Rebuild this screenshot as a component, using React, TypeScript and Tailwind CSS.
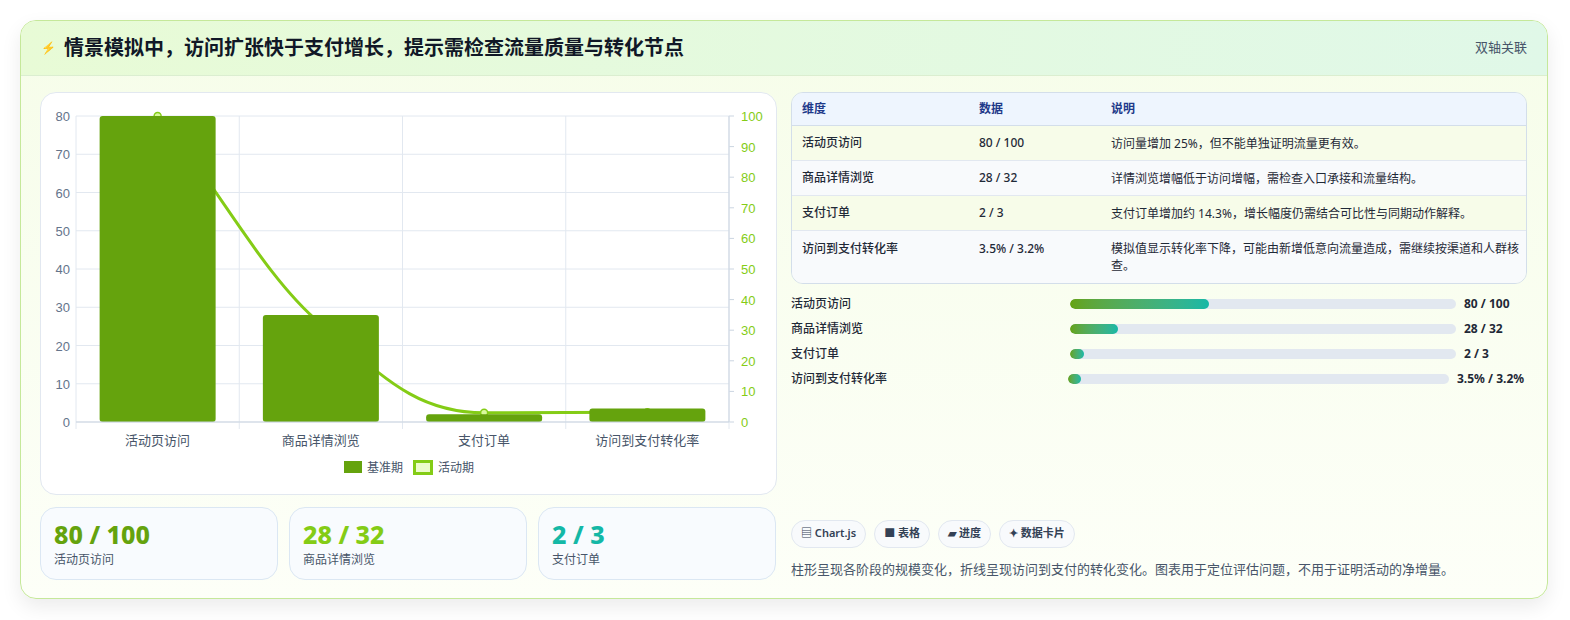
import React from "react";

const F = { fontFamily: '"Noto Sans", "Noto Sans CJK SC", sans-serif' };

function Chart() {
  const x0 = 35, x1 = 688, yTop = 23, yBot = 329;
  const cw = (x1 - x0) / 4;
  const cats = ["活动页访问", "商品详情浏览", "支付订单", "访问到支付转化率"];
  const bars = [80, 28, 2, 3.5];
  const line = [100, 32, 3, 3.2];
  const ly = (v: number) => yBot - (v / 80) * (yBot - yTop);
  const ry = (v: number) => yBot - (v / 100) * (yBot - yTop);
  const cx = (i: number) => x0 + cw * (i + 0.5);
  const pts = line.map((v, i) => [cx(i), ry(v)]);
  const d = `M${pts[0][0]},${pts[0][1]} C${pts[0][0] + 55},${pts[0][1] + 60} ${pts[1][0] - 60},${pts[1][1] - 50} ${pts[1][0]},${pts[1][1]} C${pts[1][0] + 60},${pts[1][1] + 50} ${pts[2][0] - 70},${pts[2][1]} ${pts[2][0]},${pts[2][1]} C${pts[2][0] + 60},${pts[2][1]} ${pts[3][0] - 60},${pts[3][1]} ${pts[3][0]},${pts[3][1]}`;
  return (
    <svg width="737" height="403" viewBox="0 0 737 403" style={{ fontFamily: '"Liberation Sans", "Noto Sans CJK SC", sans-serif' }}>
      {[0, 10, 20, 30, 40, 50, 60, 70, 80].map((v) => (
        <g key={v}>
          <line x1={x0} x2={x1} y1={ly(v)} y2={ly(v)} stroke="#e2e8f0" />
          <text x={29} y={ly(v) + 5} fontSize="13" fill="#64748b" textAnchor="end">{v}</text>
        </g>
      ))}
      {[0, 10, 20, 30, 40, 50, 60, 70, 80, 90, 100].map((v) => (
        <g key={v}>
          <line x1={x1} x2={x1 + 5} y1={ry(v)} y2={ry(v)} stroke="#cbd5e1" />
          <text x={700} y={ry(v) + 5} fontSize="13" fill="#84cc16">{v}</text>
        </g>
      ))}
      {[0, 1, 2, 3, 4].map((i) => (
        <line key={i} x1={x0 + cw * i} x2={x0 + cw * i} y1={yTop} y2={yBot + 7} stroke="#e2e8f0" />
      ))}
      <line x1={x1} x2={x1} y1={yTop} y2={yBot} stroke="#cbd5e1" />
      <path d={d} fill="none" stroke="#84cc16" strokeWidth="3" />
      {pts.map((p, i) => (
        <circle key={i} cx={p[0]} cy={p[1]} r="3.5" fill="#d9f99d" stroke="#84cc16" strokeWidth="1.5" />
      ))}
      {bars.map((v, i) => (
        <rect key={i} x={cx(i) - 58} y={ly(v)} width={116} height={yBot - ly(v)} rx={3} fill="#65a30d" />
      ))}
      <line x1={x0} x2={x1} y1={yBot} y2={yBot} stroke="#cbd5e1" />
      {cats.map((c, i) => (
        <text key={c} x={cx(i)} y={352} fontSize="13" fill="#475569" textAnchor="middle">{c}</text>
      ))}
      <rect x={303} y={368} width={18} height={12} fill="#65a30d" />
      <text x={326} y={379} fontSize="12" fill="#475569">基准期</text>
      <rect x={373.5} y={368.5} width={17} height={12} fill="#ecfccb" stroke="#84cc16" strokeWidth="3" />
      <text x={397} y={379} fontSize="12" fill="#475569">活动期</text>
    </svg>
  );
}

const rows = [
  ["活动页访问", "80 / 100", "访问量增加 25%，但不能单独证明流量更有效。", "bg-[#f7fce9]"],
  ["商品详情浏览", "28 / 32", "详情浏览增幅低于访问增幅，需检查入口承接和流量结构。", "bg-[#f8fafc]"],
  ["支付订单", "2 / 3", "支付订单增加约 14.3%，增长幅度仍需结合可比性与同期动作解释。", "bg-[#f7fce9]"],
  ["访问到支付转化率", "3.5% / 3.2%", "模拟值显示转化率下降，可能由新增低意向流量造成，需继续按渠道和人群核查。", "bg-[#f8fafc]"],
];

const progress = [
  ["活动页访问", "80 / 100", 36],
  ["商品详情浏览", "28 / 32", 12.5],
  ["支付订单", "2 / 3", 3.5],
  ["访问到支付转化率", "3.5% / 3.2%", 3.5],
] as const;

export default function App() {
  return (
    <div className="w-[1570px] h-[620px] bg-white pt-5 px-5" style={F}>
      <div className="w-[1528px] h-[579px] rounded-2xl border border-[#c5e89a] bg-gradient-to-b from-[#f6fde9] to-[#fdfff8] shadow-[0_8px_20px_rgba(0,0,0,0.08)] overflow-hidden flex flex-col">
        <div className="h-[55px] shrink-0 flex items-center justify-between px-5 bg-gradient-to-r from-[#e8fbd6] to-[#e0f8e8] border-b border-[#dbeed0]">
          <div className="flex items-center gap-2">
            <span className="text-[12px] text-[#3b82f6]">⚡</span>
            <span className="text-[20px] font-bold text-[#111827]">情景模拟中，访问扩张快于支付增长，提示需检查流量质量与转化节点</span>
          </div>
          <span className="text-[13px] text-[#475569]">双轴关联</span>
        </div>
        <div className="flex gap-[14px] pl-[19px] pr-5 pt-4 flex-1">
          <div className="w-[737px] flex flex-col gap-3">
            <div className="h-[403px] rounded-2xl border border-[#e2e8f0] bg-white overflow-hidden">
              <Chart />
            </div>
            <div className="flex gap-[11px]">
              {[["80 / 100", "活动页访问", "text-[#65a30d]"], ["28 / 32", "商品详情浏览", "text-[#84cc16]"], ["2 / 3", "支付订单", "text-[#14b8a6]"]].map(([v, l, c]) => (
                <div key={l} className="w-[238px] h-[73px] rounded-2xl border border-[#dbe7f3] bg-[#f8fbfe] px-[13px] pt-[10px]">
                  <div className={`text-[25px] font-extrabold leading-[32px] ${c}`}>{v}</div>
                  <div className="text-[12px] text-[#475569] mt-[1px]">{l}</div>
                </div>
              ))}
            </div>
          </div>
          <div className="w-[737px] flex flex-col">
            <div className="rounded-xl border border-[#d3deea] overflow-hidden text-[12px] text-[#1f2937]">
              <div className="h-[33px] flex items-center bg-[#eef5fe] text-[#1e3a8a] font-semibold border-b border-[#d3deea]">
                <div className="w-[187px] pl-[10px]">维度</div>
                <div className="w-[132px]">数据</div>
                <div className="flex-1">说明</div>
              </div>
              {rows.map(([a, b, c, bg], i) => (
                <div key={a} className={`flex ${i === 3 ? "items-start pt-[9px] pb-[9px]" : "items-center h-[35px]"} ${bg} ${i < 3 ? "border-b border-[#e2e8f0]" : ""}`}>
                  <div className="w-[187px] pl-[10px] font-medium">{a}</div>
                  <div className="w-[132px] font-medium">{b}</div>
                  <div className="flex-1 pr-[4px] leading-[17px]">{c}</div>
                </div>
              ))}
            </div>
            <div className="mt-[7px] flex flex-col text-[12px] font-medium text-[#1f2937]">
              {progress.map(([l, v, p], i) => (
                <div key={l} className="h-[25px] flex items-center">
                  <div className={i === 3 ? "w-[277px]" : "w-[279px]"}>{l}</div>
                  <div className="flex-1 h-[10px] rounded-full bg-[#e2e8f0] overflow-hidden">
                    <div className="h-full rounded-full bg-gradient-to-r from-[#65a30d] to-[#14b8a6]" style={{ width: `${p}%`, minWidth: 13 }} />
                  </div>
                  <div className={i === 3 ? "w-[78px] pl-[8px] font-bold" : "w-[71px] pl-[8px] font-bold"}>{v}</div>
                </div>
              ))}
            </div>
            <div className="mt-auto flex flex-col">
              <div className="flex gap-2 text-[11px] font-semibold text-[#334155]">
                {["▤ Chart.js", "■ 表格", "▰ 进度", "✦ 数据卡片"].map((t) => (
                  <span key={t} className="h-[28px] px-[9px] flex items-center rounded-full border border-[#e2e8f0] bg-[#f8fafc]">{t}</span>
                ))}
              </div>
              <div className="mt-[12px] mb-[19px] text-[13px] text-[#475569]">柱形呈现各阶段的规模变化，折线呈现访问到支付的转化变化。图表用于定位评估问题，不用于证明活动的净增量。</div>
            </div>
          </div>
        </div>
      </div>
    </div>
  );
}
